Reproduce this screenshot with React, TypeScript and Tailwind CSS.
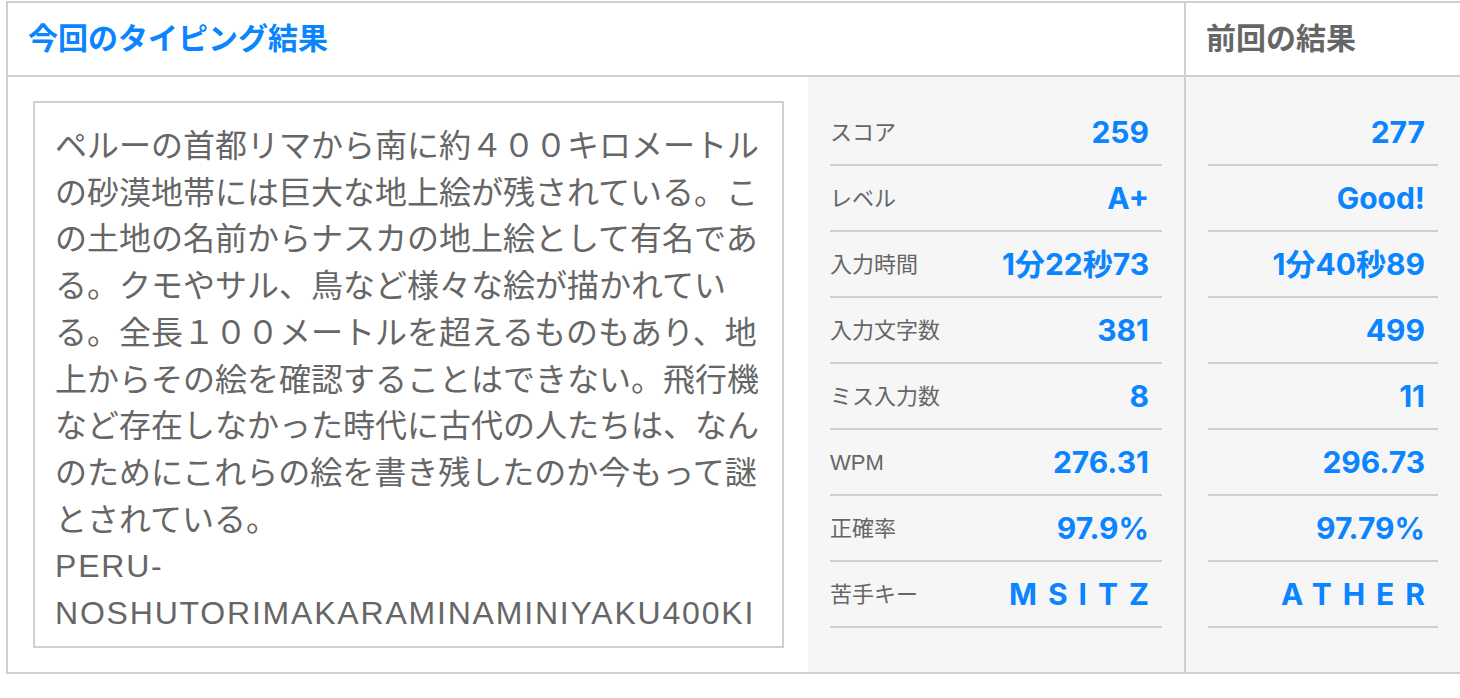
import React from "react";

const jp = { fontFamily: '"Liberation Sans","Noto Sans CJK JP",sans-serif' };
const val = { fontFamily: 'Inter,"Noto Sans CJK JP",sans-serif' };

const current: [string, string, boolean?][] = [
  ["スコア", "259"],
  ["レベル", "A+"],
  ["入力時間", "1分22秒73"],
  ["入力文字数", "381"],
  ["ミス入力数", "8"],
  ["WPM", "276.31"],
  ["正確率", "97.9%"],
  ["苦手キー", "MSITZ", true],
];

const previous: [string, boolean?][] = [
  ["277"],
  ["Good!"],
  ["1分40秒89"],
  ["499"],
  ["11"],
  ["296.73"],
  ["97.79%"],
  ["ATHER", true],
];

const lines = [
  "ペルーの首都リマから南に約４００キロメートル",
  "の砂漠地帯には巨大な地上絵が残されている。こ",
  "の土地の名前からナスカの地上絵として有名であ",
  "る。クモやサル、鳥など様々な絵が描かれてい",
  "る。全長１００メートルを超えるものもあり、地",
  "上からその絵を確認することはできない。飛行機",
  "など存在しなかった時代に古代の人たちは、なん",
  "のためにこれらの絵を書き残したのか今もって謎",
  "とされている。",
];

function Value({ text, spaced }: { text: string; spaced?: boolean }) {
  if (spaced) {
    return (
      <span className="text-[30px] font-bold text-[#0a84ff] tracking-[11px] mr-[-11px]" style={val}>
        {text}
      </span>
    );
  }
  return (
    <span className="text-[30px] font-bold text-[#0a84ff]" style={val}>
      {text}
    </span>
  );
}

export default function App() {
  return (
    <div className="w-[1460px] h-[698px] overflow-hidden bg-white" style={jp}>
      <div className="ml-[6px] mt-[1px] w-[1456px] border-2 border-[#d0d0d0]">
        <div className="flex h-[74px] border-b-2 border-[#d0d0d0]">
          <div className="w-[1178px] border-r-2 border-[#d0d0d0] flex items-center pl-[20px]">
            <span className="text-[30px] font-bold text-[#0a84ff] leading-none">今回のタイピング結果</span>
          </div>
          <div className="flex-1 flex items-center pl-[20px]">
            <span className="text-[30px] font-bold text-[#666666] leading-none">前回の結果</span>
          </div>
        </div>
        <div className="flex h-[595px]">
          <div className="w-[1178px] border-r-2 border-[#d0d0d0] flex">
            <div className="pt-[24px] pb-[24px] pl-[25px] pr-[24px]">
              <div className="w-[751px] h-[547px] border-2 border-[#d0d0d0] overflow-hidden px-[20px] pt-[20px] text-[32px] leading-[46.7px] text-[#666666]">
                {lines.map((l, i) => (
                  <div key={i} className="whitespace-nowrap">{l}</div>
                ))}
                <div className="whitespace-nowrap tracking-[1.8px]">PERU-</div>
                <div className="whitespace-nowrap tracking-[1.8px]">NOSHUTORIMAKARAMINAMINIYAKU400KI</div>
              </div>
            </div>
            <div className="w-[376px] bg-[#f6f6f6] pt-[23px] px-[22px]">
              {current.map(([label, v, sp], i) => (
                <div key={i} className="flex items-center justify-between h-[66px] border-b-2 border-[#d0d0d0] pr-[13px]">
                  <span className="text-[22px] text-[#666666]">{label}</span>
                  <Value text={v} spaced={sp} />
                </div>
              ))}
            </div>
          </div>
          <div className="flex-1 bg-[#f6f6f6] pt-[23px] px-[22px]">
            {previous.map(([v, sp], i) => (
              <div key={i} className="flex items-center justify-end h-[66px] border-b-2 border-[#d0d0d0] pr-[13px]">
                <Value text={v} spaced={sp} />
              </div>
            ))}
          </div>
        </div>
      </div>
    </div>
  );
}
